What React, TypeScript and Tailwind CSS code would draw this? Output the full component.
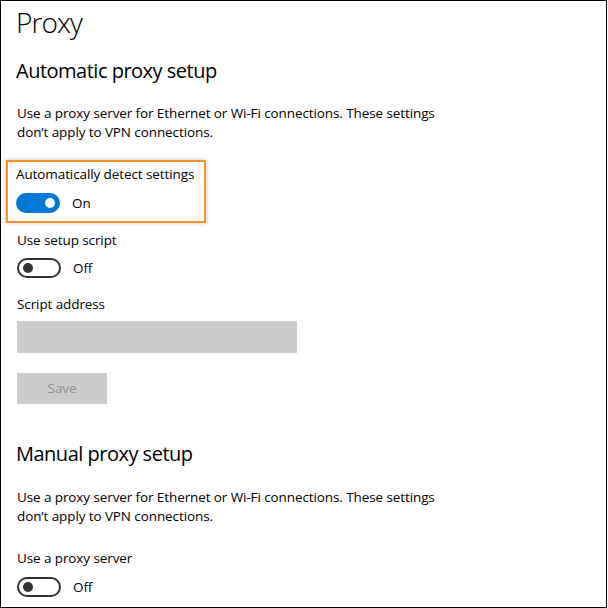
const font = { fontFamily: '"Open Sans", "Noto Sans", sans-serif' }

function Toggle({ on }: { on: boolean }) {
  return (
    <div className="flex items-center">
      {on ? (
        <div className="flex h-[20px] w-[44px] items-center justify-end rounded-full bg-[#0078d7] pr-[5px]">
          <div className="h-[10px] w-[10px] rounded-full bg-white" />
        </div>
      ) : (
        <div className="flex h-[20px] w-[44px] items-center rounded-full border-2 border-[#333333] pl-[4px]">
          <div className="h-[10px] w-[10px] rounded-full bg-[#333333]" />
        </div>
      )}
      <span className="ml-[12px] text-[13.5px] leading-[20px] tracking-[-0.1px] text-black">{on ? 'On' : 'Off'}</span>
    </div>
  )
}

function Description({ className }: { className: string }) {
  return (
    <p className={`w-[440px] text-[13.5px] leading-[19px] tracking-[-0.1px] text-black ${className}`}>
      Use a proxy server for Ethernet or Wi-Fi connections. These settings don’t apply to VPN connections.
    </p>
  )
}

export default function App() {
  return (
    <div className="h-[608px] w-[608px] bg-white" style={font}>
      <div className="flex h-[608px] w-[607px] flex-col border border-black pl-[15px]">
        <h1 className="mt-px h-[40px] text-[28px] font-light leading-[40px] tracking-[-0.9px] text-black">Proxy</h1>

        <h2 className="mt-[15px] h-[28px] text-[20px] leading-[28px] tracking-[-0.5px] text-black">
          Automatic proxy setup
        </h2>
        <Description className="mt-[19px] pl-px" />

        <div className="mt-[18px] -ml-[10px] w-[200px] border-2 border-[#f7922a] px-[8px] pt-[2px] pb-[8px] shadow-[0_0_4px_rgba(0,0,0,0.25)]">
          <div className="h-[20px] whitespace-nowrap text-[13.5px] leading-[20px] tracking-[-0.1px] text-black">
            Automatically detect settings
          </div>
          <div className="mt-[9px]">
            <Toggle on />
          </div>
        </div>

        <div className="mt-[7px] h-[20px] pl-px text-[13.5px] leading-[20px] tracking-[-0.1px] text-black">
          Use setup script
        </div>
        <div className="mt-[8px] pl-px">
          <Toggle on={false} />
        </div>

        <div className="mt-[16px] h-[20px] pl-px text-[13.5px] leading-[20px] tracking-[-0.1px] text-black">
          Script address
        </div>
        <div className="mt-[7px] ml-px h-[32px] w-[280px] bg-[#cccccc]" />

        <button className="mt-[20px] ml-px h-[31px] w-[90px] bg-[#cccccc] text-[13.5px] tracking-[-0.1px] text-[#8c8c8c]">
          Save
        </button>

        <h2 className="mt-[36px] h-[28px] text-[20px] leading-[28px] tracking-[-0.5px] text-black">
          Manual proxy setup
        </h2>
        <Description className="mt-[20px] pl-px" />

        <div className="mt-[22px] h-[20px] pl-px text-[13.5px] leading-[20px] tracking-[-0.1px] text-black">
          Use a proxy server
        </div>
        <div className="mt-[9px] pl-px">
          <Toggle on={false} />
        </div>
      </div>
    </div>
  )
}
